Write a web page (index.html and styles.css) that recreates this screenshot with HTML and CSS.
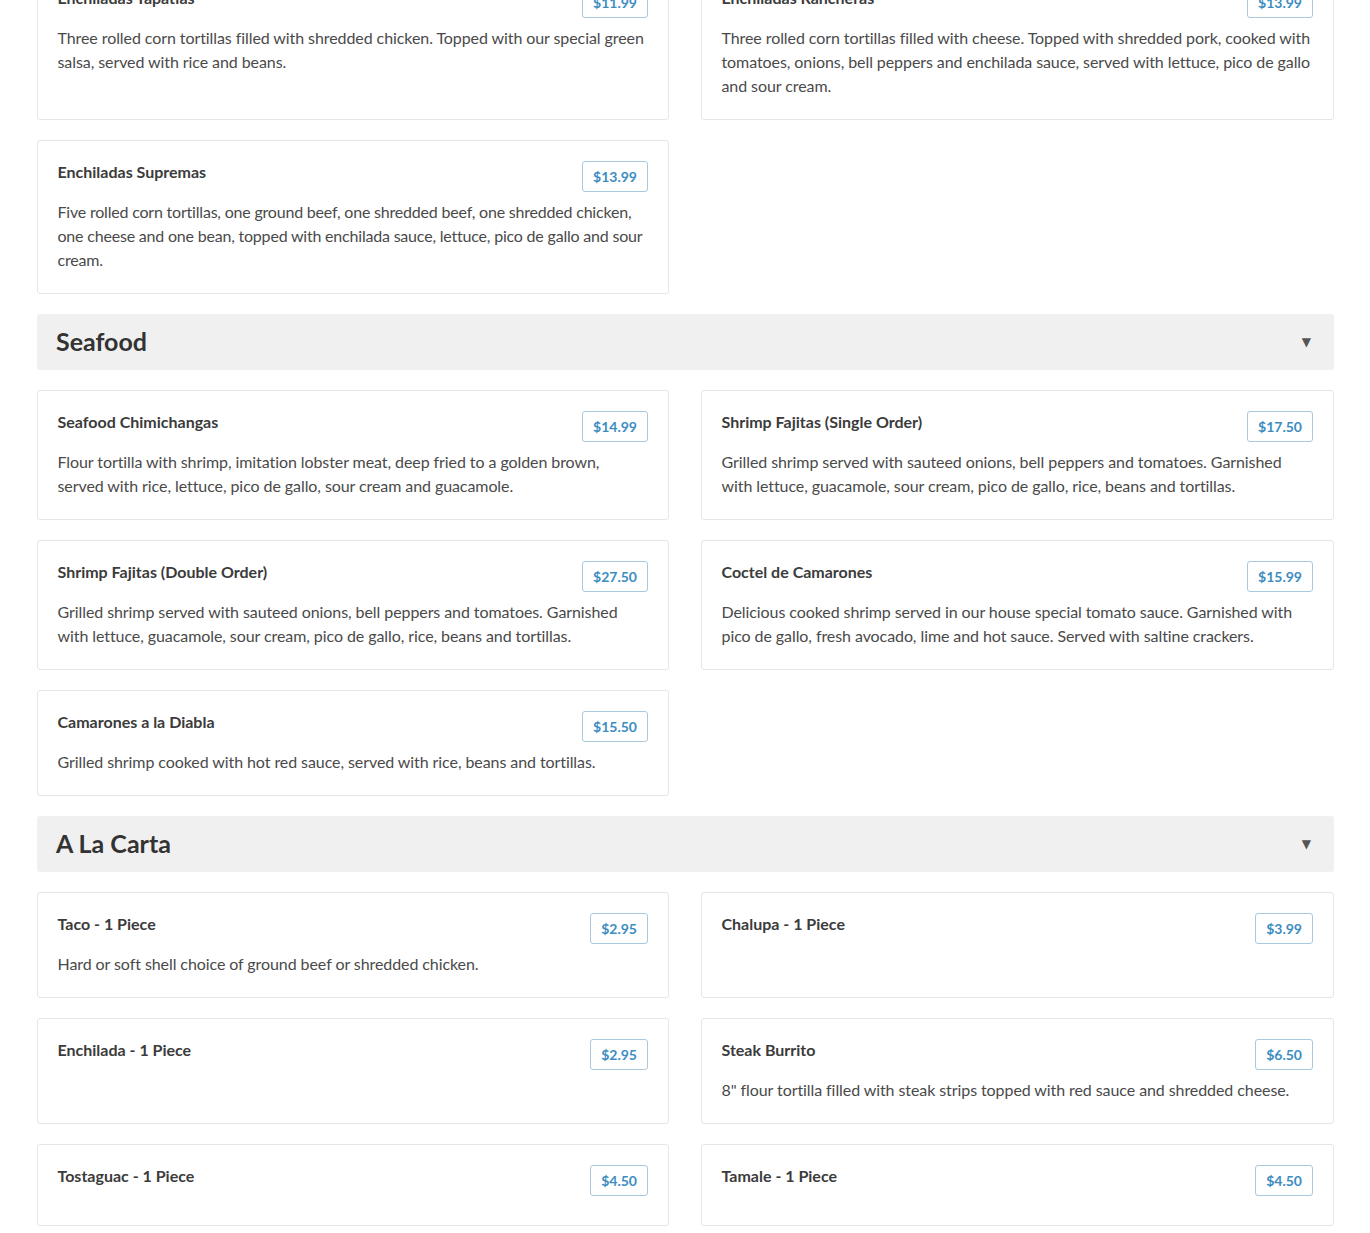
FILE: index.html
```html
<!DOCTYPE html>
<html lang="en">
<head>
<meta charset="utf-8">
<title>Menu</title>
<link rel="stylesheet" href="styles.css">
</head>
<body>
<main class="menu">
  <section class="grid">
    <article class="card">
      <div class="card-head"><h3 class="item-name">Enchiladas Tapatias</h3><span class="price">$11.99</span></div>
      <p class="desc">Three rolled corn tortillas filled with shredded chicken. Topped with our special green salsa, served with rice and beans.</p>
    </article>
    <article class="card">
      <div class="card-head"><h3 class="item-name">Enchiladas Rancheras</h3><span class="price">$13.99</span></div>
      <p class="desc">Three rolled corn tortillas filled with cheese. Topped with shredded pork, cooked with tomatoes, onions, bell peppers and enchilada sauce, served with lettuce, pico de gallo and sour cream.</p>
    </article>
    <article class="card">
      <div class="card-head"><h3 class="item-name">Enchiladas Supremas</h3><span class="price">$13.99</span></div>
      <p class="desc desc-tight">Five rolled corn tortillas, one ground beef, one shredded beef, one shredded chicken, one cheese and one bean, topped with enchilada sauce, lettuce, pico de gallo and sour cream.</p>
    </article>
  </section>

  <header class="section-head"><h2>Seafood</h2><span class="caret">▼</span></header>
  <section class="grid">
    <article class="card">
      <div class="card-head"><h3 class="item-name">Seafood Chimichangas</h3><span class="price">$14.99</span></div>
      <p class="desc">Flour tortilla with shrimp, imitation lobster meat, deep fried to a golden brown, served with rice, lettuce, pico de gallo, sour cream and guacamole.</p>
    </article>
    <article class="card">
      <div class="card-head"><h3 class="item-name">Shrimp Fajitas (Single Order)</h3><span class="price">$17.50</span></div>
      <p class="desc">Grilled shrimp served with sauteed onions, bell peppers and tomatoes. Garnished with lettuce, guacamole, sour cream, pico de gallo, rice, beans and tortillas.</p>
    </article>
    <article class="card">
      <div class="card-head"><h3 class="item-name">Shrimp Fajitas (Double Order)</h3><span class="price">$27.50</span></div>
      <p class="desc">Grilled shrimp served with sauteed onions, bell peppers and tomatoes. Garnished with lettuce, guacamole, sour cream, pico de gallo, rice, beans and tortillas.</p>
    </article>
    <article class="card">
      <div class="card-head"><h3 class="item-name">Coctel de Camarones</h3><span class="price">$15.99</span></div>
      <p class="desc">Delicious cooked shrimp served in our house special tomato sauce. Garnished with pico de gallo, fresh avocado, lime and hot sauce. Served with saltine crackers.</p>
    </article>
    <article class="card">
      <div class="card-head"><h3 class="item-name">Camarones a la Diabla</h3><span class="price">$15.50</span></div>
      <p class="desc">Grilled shrimp cooked with hot red sauce, served with rice, beans and tortillas.</p>
    </article>
  </section>

  <header class="section-head"><h2>A La Carta</h2><span class="caret">▼</span></header>
  <section class="grid">
    <article class="card">
      <div class="card-head"><h3 class="item-name">Taco - 1 Piece</h3><span class="price">$2.95</span></div>
      <p class="desc">Hard or soft shell choice of ground beef or shredded chicken.</p>
    </article>
    <article class="card">
      <div class="card-head"><h3 class="item-name">Chalupa - 1 Piece</h3><span class="price">$3.99</span></div>
      <p class="desc"></p>
    </article>
    <article class="card">
      <div class="card-head"><h3 class="item-name">Enchilada - 1 Piece</h3><span class="price">$2.95</span></div>
      <p class="desc"></p>
    </article>
    <article class="card">
      <div class="card-head"><h3 class="item-name">Steak Burrito</h3><span class="price">$6.50</span></div>
      <p class="desc">8" flour tortilla filled with steak strips topped with red sauce and shredded cheese.</p>
    </article>
    <article class="card">
      <div class="card-head"><h3 class="item-name">Tostaguac - 1 Piece</h3><span class="price">$4.50</span></div>
      <p class="desc"></p>
    </article>
    <article class="card">
      <div class="card-head"><h3 class="item-name">Tamale - 1 Piece</h3><span class="price">$4.50</span></div>
      <p class="desc"></p>
    </article>
  </section>
</main>
</body>
</html>
```

FILE: styles.css
```css
* { box-sizing: border-box; }
html, body { margin: 0; padding: 0; background: #fff; }
body {
  font-family: Lato, "Open Sans", "Liberation Sans", sans-serif;
  color: #4a4a4a;
  overflow: hidden;
}
.menu {
  width: 1297px;
  margin: -34px 0 0 37px;
  display: flex;
  flex-direction: column;
  gap: 20px;
}
.grid {
  display: grid;
  grid-template-columns: 632px 633px;
  column-gap: 32px;
  row-gap: 20px;
}
.card {
  border: 1px solid #e6e6e6;
  border-radius: 3px;
  padding: 19px 20px 21px 19.5px;
  background: #fff;
}
.card-head {
  display: flex;
  justify-content: space-between;
  align-items: flex-start;
  margin-bottom: 9px;
}
.item-name {
  margin: 0;
  font-size: 16px;
  line-height: 24px;
  font-weight: 700;
  color: #3b3b3b;
}
.price {
  display: inline-block;
  height: 31px;
  margin-top: 1px;
  margin-bottom: -1px;
  padding: 0 10px;
  border: 1px solid #a9c9dd;
  border-radius: 3px;
  font-size: 14px;
  font-weight: 700;
  line-height: 29px;
  color: #3d8dc1;
  background: #fff;
}
.desc {
  margin: 0;
  font-size: 16px;
  line-height: 24px;
  letter-spacing: -0.08px;
  color: #4a4a4a;
}
.desc-tight { letter-spacing: -0.2px; }
.section-head {
  height: 56px;
  background: #f0f0f0;
  border-radius: 3px;
  padding: 0 23px 3px 19px;
  display: flex;
  align-items: center;
  justify-content: space-between;
}
.section-head h2 {
  margin: 0;
  font-size: 25px;
  font-weight: 700;
  color: #333;
  line-height: 30px;
}
.caret {
  font-size: 12px;
  color: #555;
  line-height: 1;
  margin-top: 3px;
  font-family: "DejaVu Sans", sans-serif;
}
```
